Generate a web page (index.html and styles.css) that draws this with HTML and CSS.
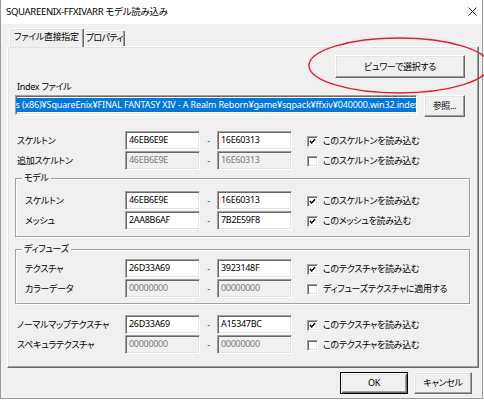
FILE: index.html
```html
<!DOCTYPE html>
<html lang="ja">
<head>
<meta charset="utf-8">
<title>SQUAREENIX-FFXIVARR モデル読み込み</title>
<link rel="stylesheet" href="styles.css">
</head>
<body>
<div class="window">
  <div class="titlebar">
    <span class="title">SQUAREENIX-FFXIVARR モデル読み込み</span>
    <svg class="close" width="9" height="9" viewBox="0 0 9 9"><path d="M0.5 0.5 L8.5 8.5 M8.5 0.5 L0.5 8.5" stroke="#222" stroke-width="1" fill="none"/></svg>
  </div>
  <div class="client">
    <div class="tabs">
      <div class="tab active">ファイル直接指定</div>
      <div class="tab prop">プロパティ</div>
    </div>
    <div class="panel">
      <div class="viewer-row"><button class="btn viewer">ビュワーで選択する</button></div>
      <div class="index-label">Index ファイル</div>
      <div class="path-row">
        <div class="edit path"><span class="sel">C:¥Program Files (x86)¥SquareEnix¥FINAL FANTASY XIV - A Realm Reborn¥game¥sqpack¥ffxiv¥040000.win32.index</span></div>
        <button class="btn browse">参照...</button>
      </div>

      <div class="rows top-rows">
        <div class="row">
          <span class="lbl">スケルトン</span>
          <span class="edit">46EB6E9E</span><span class="dash">-</span><span class="edit">16E60313</span>
          <span class="chk checked"><svg viewBox="0 0 11 11"><path d="M2.3 5 L4.4 7.3 L8.6 2.8" fill="none" stroke="#000" stroke-width="1.7"/></svg></span>
          <span class="chk-label">このスケルトンを読み込む</span>
        </div>
        <div class="row">
          <span class="lbl">追加スケルトン</span>
          <span class="edit disabled">46EB6E9E</span><span class="dash">-</span><span class="edit disabled">16E60313</span>
          <span class="chk"></span>
          <span class="chk-label">このスケルトンを読み込む</span>
        </div>
      </div>

      <fieldset class="group group-model">
        <legend>モデル</legend>
        <div class="row">
          <span class="lbl inner">スケルトン</span>
          <span class="edit">46EB6E9E</span><span class="dash">-</span><span class="edit">16E60313</span>
          <span class="chk checked"><svg viewBox="0 0 11 11"><path d="M2.3 5 L4.4 7.3 L8.6 2.8" fill="none" stroke="#000" stroke-width="1.7"/></svg></span>
          <span class="chk-label">このスケルトンを読み込む</span>
        </div>
        <div class="row">
          <span class="lbl inner">メッシュ</span>
          <span class="edit">2AA8B6AF</span><span class="dash">-</span><span class="edit">7B2E59F8</span>
          <span class="chk checked"><svg viewBox="0 0 11 11"><path d="M2.3 5 L4.4 7.3 L8.6 2.8" fill="none" stroke="#000" stroke-width="1.7"/></svg></span>
          <span class="chk-label">このメッシュを読み込む</span>
        </div>
      </fieldset>

      <fieldset class="group group-diffuse">
        <legend>ディフューズ</legend>
        <div class="row">
          <span class="lbl inner">テクスチャ</span>
          <span class="edit">26D33A69</span><span class="dash">-</span><span class="edit">3923148F</span>
          <span class="chk checked"><svg viewBox="0 0 11 11"><path d="M2.3 5 L4.4 7.3 L8.6 2.8" fill="none" stroke="#000" stroke-width="1.7"/></svg></span>
          <span class="chk-label">このテクスチャを読み込む</span>
        </div>
        <div class="row">
          <span class="lbl inner">カラーデータ</span>
          <span class="edit disabled">00000000</span><span class="dash">-</span><span class="edit disabled">00000000</span>
          <span class="chk"></span>
          <span class="chk-label">ディフューズテクスチャに適用する</span>
        </div>
      </fieldset>

      <div class="rows bottom-rows">
        <div class="row">
          <span class="lbl">ノーマルマップテクスチャ</span>
          <span class="edit">26D33A69</span><span class="dash">-</span><span class="edit">A15347BC</span>
          <span class="chk checked"><svg viewBox="0 0 11 11"><path d="M2.3 5 L4.4 7.3 L8.6 2.8" fill="none" stroke="#000" stroke-width="1.7"/></svg></span>
          <span class="chk-label">このテクスチャを読み込む</span>
        </div>
        <div class="row">
          <span class="lbl">スペキュラテクスチャ</span>
          <span class="edit disabled">00000000</span><span class="dash">-</span><span class="edit disabled">00000000</span>
          <span class="chk"></span>
          <span class="chk-label">このテクスチャを読み込む</span>
        </div>
      </div>
    </div>
    <div class="footer">
      <button class="btn default ok">OK</button>
      <button class="btn cancel">キャンセル</button>
    </div>
  </div>
  <svg class="annotation" width="484" height="400" viewBox="0 0 484 400">
    <ellipse cx="399" cy="65.5" rx="90" ry="27.5" fill="none" stroke="#e0202c" stroke-width="1.4"/>
  </svg>
</div>
</body>
</html>
```

FILE: styles.css
```css
* {
  box-sizing: border-box;
}

html, body {
  margin: 0;
  padding: 0;
  background: #ffffff;
}

body {
  font-family: "Noto Sans", "Noto Sans CJK JP", sans-serif;
  font-size: 9px;
  letter-spacing: -0.3px;
  color: #000;
  font-feature-settings: "palt";
}

.window {
  position: relative;
  width: 483px;
  height: 399px;
  background: #f0f0f0;
  border: 1px solid #9a9a9a;
  border-top: none;
  display: flex;
  flex-direction: column;
}

.titlebar {
  height: 24px;
  flex: 0 0 24px;
  background: #ffffff;
  display: flex;
  align-items: center;
  justify-content: space-between;
  padding: 0 5px 0 5px;
}

.title {
  font-size: 9.5px;
  line-height: 14px;
  color: #000;
}

.close {
  display: block;
  margin-top: -1px;
}

.client {
  flex: 1;
  padding: 4px 10px 0 6px;
}

/* Tabs */
.tabs {
  display: flex;
  align-items: flex-end;
  height: 18px;
  margin-left: 2px;
}

.tab {
  height: 16px;
  padding: 0 3px;
  text-align: center;
  line-height: 14px;
  border: 1px solid;
  border-bottom: none;
  border-color: #ffffff #696969 transparent #ffffff;
  box-shadow: inset -1px 0 #a0a0a0, inset 1px 1px #e3e3e3;
  border-radius: 2px 2px 0 0;
  white-space: nowrap;
}

.tab.prop {
  width: 41px;
  padding: 0;
  letter-spacing: -0.6px;
}

.tab.active {
  position: relative;
  z-index: 1;
  height: 19px;
  padding: 0 4px;
  margin-bottom: -1px;
  background: #f0f0f0;
  line-height: 16px;
}

/* Tab panel */
.panel {
  width: 472px;
  height: 322px;
  border: 1px solid;
  border-color: #ffffff #696969 #696969 #ffffff;
  box-shadow: inset -1px -1px #a0a0a0, inset 1px 1px #e3e3e3;
}

.viewer-row {
  display: flex;
  justify-content: flex-end;
  padding: 8px 13px 0 0;
}

.btn {
  font-family: inherit;
  font-size: 9px;
  letter-spacing: -0.3px;
  font-feature-settings: "palt";
  color: #000;
  background: #f0f0f0;
  border: 1px solid;
  border-color: #ffffff #696969 #696969 #ffffff;
  box-shadow: inset -1px -1px #a0a0a0, inset 1px 1px #e3e3e3;
  padding: 0;
  margin: 0;
  line-height: 14px;
}

.viewer {
  width: 130px;
  height: 23px;
}

.index-label {
  margin: 2px 0 0 9px;
  line-height: 14px;
}

.path-row {
  display: flex;
  align-items: flex-start;
  gap: 7px;
  margin: 1px 0 0 7px;
}

.edit {
  display: block;
  height: 19px;
  width: 75px;
  background: #ffffff;
  border: 1px solid;
  border-color: #a0a0a0 #ffffff #ffffff #a0a0a0;
  box-shadow: inset 1px 1px #696969, inset -1px -1px #e3e3e3;
  padding: 0 3px;
  line-height: 16px;
  white-space: nowrap;
  overflow: hidden;
}

.edit.disabled {
  background: #f0f0f0;
  color: #7a7a7a;
}

.path {
  width: 402px;
  height: 20px;
  display: flex;
  justify-content: flex-end;
  padding: 2px 0 2px 2px;
}

.sel {
  background: #0078d7;
  color: #ffffff;
  line-height: 14px;
  letter-spacing: -0.15px;
  white-space: nowrap;
  margin-right: -3px;
  flex: 0 0 auto;
}

.browse {
  width: 41px;
  height: 22px;
}

/* Rows */
.rows {
  padding-left: 9px;
}

.top-rows {
  margin-top: 14px;
}

.bottom-rows {
  margin-top: 11px;
}

.row {
  display: flex;
  align-items: center;
  height: 20px;
}

.lbl {
  width: 108px;
  flex: 0 0 auto;
  line-height: 14px;
  white-space: nowrap;
}

.lbl.inner {
  width: 100px;
}

.row .edit {
  align-self: flex-start;
}

.dash {
  width: 17px;
  text-align: center;
  color: #555;
  line-height: 14px;
}

.chk {
  width: 11px;
  height: 11px;
  margin-left: 15px;
  background: #ffffff;
  border: 1px solid;
  border-color: #a0a0a0 #ffffff #ffffff #a0a0a0;
  box-shadow: inset 1px 1px #696969, inset -1px -1px #e3e3e3;
  display: flex;
  align-items: center;
  justify-content: center;
  flex: 0 0 auto;
}

.chk svg {
  display: block;
  width: 9px;
  height: 9px;
}

.chk-label {
  margin-left: 5px;
  line-height: 14px;
  white-space: nowrap;
}

/* Group boxes */
.group {
  margin: 0 0 0 7px;
  width: 455px;
  min-width: 0;
  border: 1px solid #a0a0a0;
  box-shadow: inset 1px 1px #ffffff, 1px 1px #ffffff;
  padding: 6px 0 5px 9px;
}

.group legend {
  font-size: 9px;
  line-height: 14px;
  padding: 0 2px;
  margin-left: -3px;
  background: #f0f0f0;
}

.group-diffuse {
  margin-top: 5px;
  padding-top: 3px;
  padding-bottom: 4px;
}

/* Footer */
.footer {
  display: flex;
  justify-content: flex-end;
  gap: 6px;
  padding-top: 4px;
}

.ok {
  width: 68px;
  height: 22px;
}

.btn.default {
  border-color: #000;
  box-shadow: inset 1px 1px #ffffff, inset -1px -1px #696969, inset 2px 2px #e3e3e3, inset -2px -2px #a0a0a0;
}

.cancel {
  width: 58px;
  height: 22px;
}

.annotation {
  position: absolute;
  left: -1px;
  top: 0;
  pointer-events: none;
  overflow: visible;
}
```
